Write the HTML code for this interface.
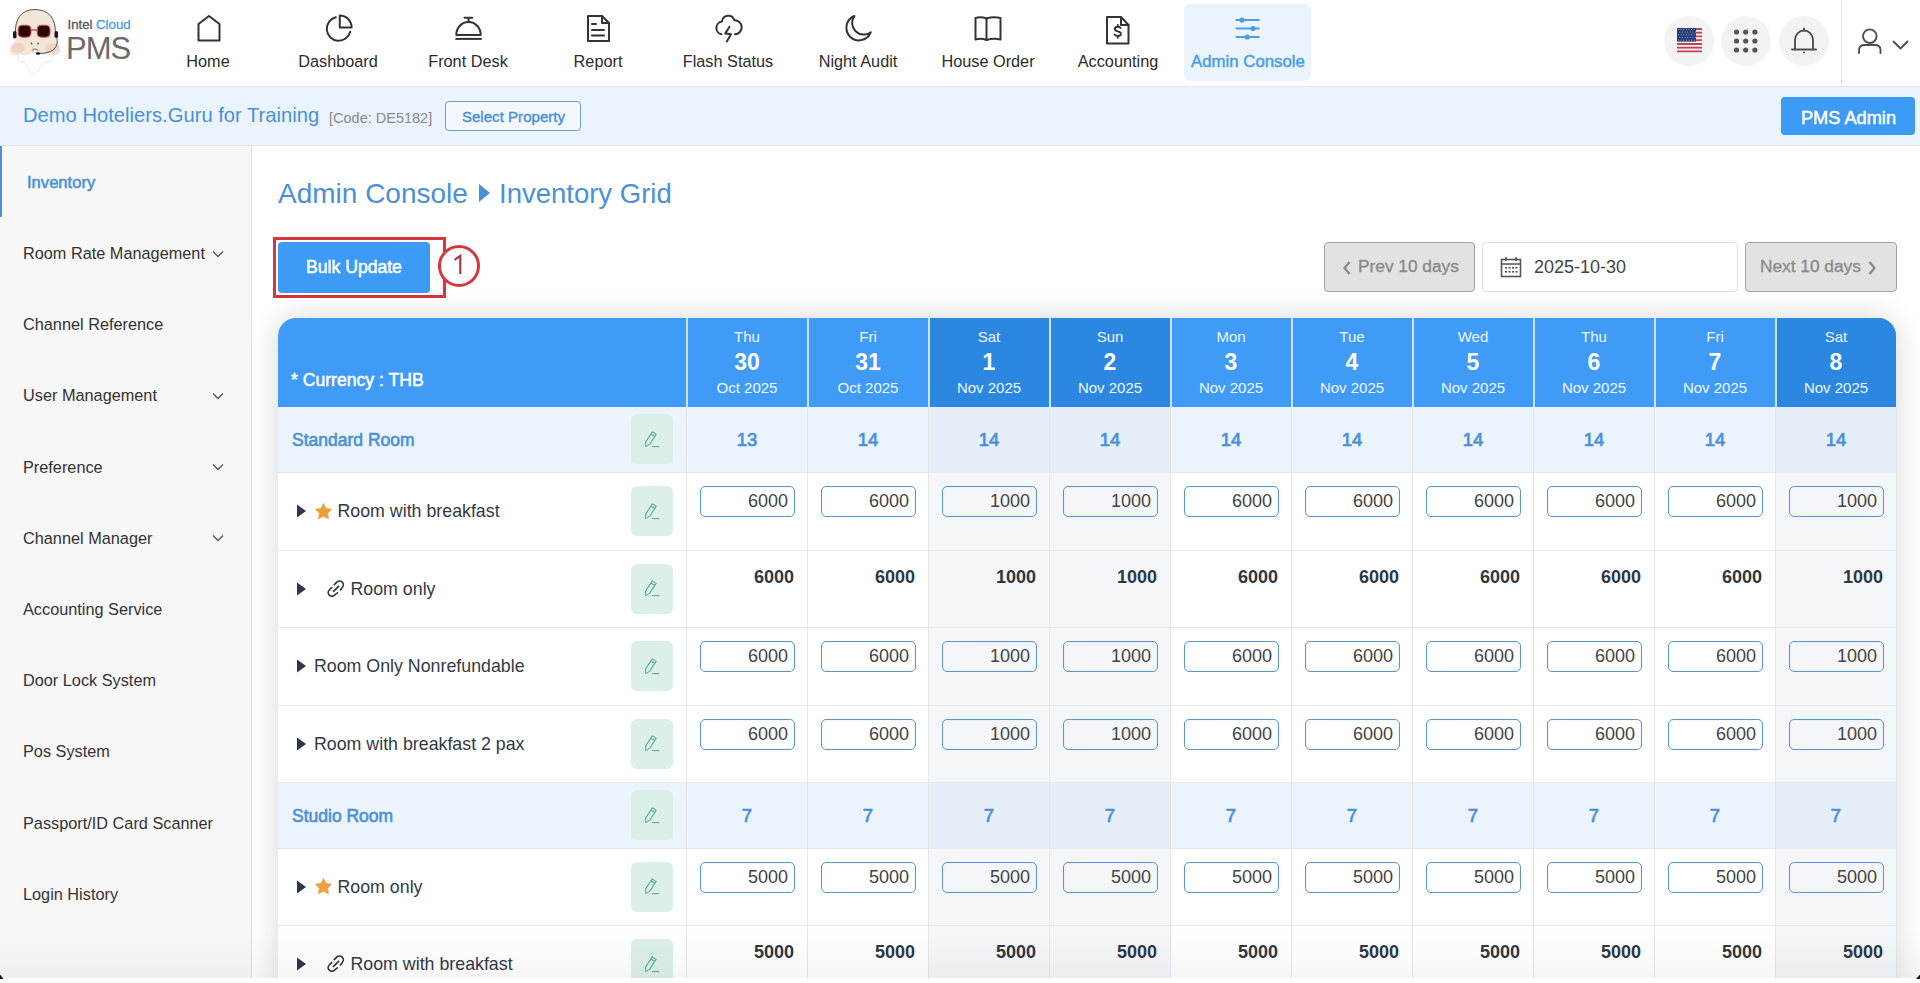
<!DOCTYPE html>
<html><head><meta charset="utf-8"><title>Inventory Grid</title>
<style>
html,body{margin:0;padding:0;width:1920px;height:983px;overflow:hidden;background:#fff;font-family:"Liberation Sans", sans-serif;}
.t{position:absolute;line-height:1;white-space:nowrap;}
svg{display:block}
</style></head><body>
<div style="position:absolute;left:0;top:0;width:1920px;height:86px;background:#fff;border-bottom:1px solid #e3e6ea"></div>
<svg style="position:absolute;left:5px;top:5px" width="60" height="75" viewBox="0 0 60 75">
<path d="M11 20 Q12 5 30 5 Q48 5 50 20 L51 36 Q57 42 55 48 Q50 52 44 50 L16 50 Q8 52 5 47 Q4 41 10 37 Z" fill="#f3e6d8"/>
<ellipse cx="13" cy="43" rx="7" ry="5" fill="#efc3b3" opacity=".55"/>
<ellipse cx="47" cy="43" rx="7" ry="5" fill="#efc3b3" opacity=".55"/>
<path d="M14 48 Q22 52 30 46 Q38 52 47 48 L47 55 Q44 58 40 57 L31 68 Q29 70 27 68 L19 57 Q15 58 13 55 Z" fill="#fdfdfd" stroke="#e4e4e4" stroke-width=".8"/>
<path d="M10.5 30 Q9 5 30 4.5 Q51 5 50.5 29" fill="none" stroke="#5a5048" stroke-width="1"/>
<rect x="8" y="26" width="3.5" height="7.5" rx="1.7" fill="#1a1a1a"/>
<rect x="49.5" y="26" width="3.5" height="7" rx="1.7" fill="#1a1a1a"/>
<path d="M52 32 Q54 44 44 47 Q39 48.5 34 48.5" fill="none" stroke="#444" stroke-width=".9"/>
<ellipse cx="33" cy="48.5" rx="2.2" ry="1.3" fill="#111"/>
<rect x="13.2" y="20.2" width="12.8" height="12" rx="4" fill="#2b0707" stroke="#d25a5a" stroke-width="1"/>
<rect x="32.2" y="20.2" width="12.8" height="12" rx="4" fill="#2b0707" stroke="#d25a5a" stroke-width="1"/>
<path d="M26 25.5 Q29 24 32.2 25.5" fill="none" stroke="#d25a5a" stroke-width="1.4"/>
<circle cx="26.5" cy="38.5" r=".9" fill="#555"/><circle cx="33" cy="38.5" r=".9" fill="#555"/>
<path d="M27 45.5 Q30 42.5 33 45.5" fill="none" stroke="#b08a7a" stroke-width="1.3"/>
</svg>
<div class="t" style="left:67.5px;top:17.53px;font-size:13.2px;color:#555;font-weight:400;-webkit-text-stroke:0.3px #555;">Intel <span style="color:#4a9de6;-webkit-text-stroke:0.3px #4a9de6">Cloud</span></div>
<div class="t" style="left:66px;top:32.76px;font-size:31px;color:#6a6a6a;font-weight:400;letter-spacing:-1px;">PMS</div>
<div class="t" style="left:108.0px;width:200px;text-align:center;top:52.50px;font-size:16.3px;color:#2c2c2c;font-weight:400;">Home</div>
<div class="t" style="left:238.0px;width:200px;text-align:center;top:52.50px;font-size:16.3px;color:#2c2c2c;font-weight:400;">Dashboard</div>
<div class="t" style="left:368.0px;width:200px;text-align:center;top:52.50px;font-size:16.3px;color:#2c2c2c;font-weight:400;">Front Desk</div>
<div class="t" style="left:498.0px;width:200px;text-align:center;top:52.50px;font-size:16.3px;color:#2c2c2c;font-weight:400;">Report</div>
<div class="t" style="left:628.0px;width:200px;text-align:center;top:52.50px;font-size:16.3px;color:#2c2c2c;font-weight:400;">Flash Status</div>
<div class="t" style="left:758.0px;width:200px;text-align:center;top:52.50px;font-size:16.3px;color:#2c2c2c;font-weight:400;">Night Audit</div>
<div class="t" style="left:888.0px;width:200px;text-align:center;top:52.50px;font-size:16.3px;color:#2c2c2c;font-weight:400;">House Order</div>
<div class="t" style="left:1018.0px;width:200px;text-align:center;top:52.50px;font-size:16.3px;color:#2c2c2c;font-weight:400;">Accounting</div>
<div style="position:absolute;left:1184px;top:4px;width:127px;height:77px;background:#ebf3fd;border-radius:6px"></div>
<div class="t" style="left:1148.0px;width:200px;text-align:center;top:53.98px;font-size:16.8px;color:#4a9de6;font-weight:400;-webkit-text-stroke:0.45px #4a9de6;">Admin Console</div>
<svg style="position:absolute;left:196px;top:14px" width="26" height="29" viewBox="0 0 26 29"><path d="M2.5 26.5 V10 L13 2 L23.5 10 V26.5 Z" fill="none" stroke="#333" stroke-width="2" stroke-linejoin="round" stroke-linecap="round"/></svg>
<svg style="position:absolute;left:323px;top:13px" width="32" height="30" viewBox="0 0 32 30"><path d="M12.8 4.3 A11.9 11.9 0 1 0 27.2 18.8" fill="none" stroke="#333" stroke-width="2" stroke-linejoin="round" stroke-linecap="round"/><path d="M16.8 14.4 V2.6 A11.8 11.8 0 0 1 28.6 14.4 Z" fill="none" stroke="#333" stroke-width="2" stroke-linejoin="round" stroke-linecap="round"/></svg>
<svg style="position:absolute;left:453px;top:15px" width="31" height="27" viewBox="0 0 31 27"><path d="M11.5 2.8 H19.3 M15.5 2.8 V6.8" fill="none" stroke="#333" stroke-width="2" stroke-linejoin="round" stroke-linecap="round"/><path d="M3.3 20 A12.2 13 0 0 1 27.7 20 Z" fill="none" stroke="#333" stroke-width="2" stroke-linejoin="round" stroke-linecap="round"/><path d="M2.4 23.9 H28.7" fill="none" stroke="#333" stroke-width="2"/></svg>
<svg style="position:absolute;left:585px;top:14px" width="27" height="29" viewBox="0 0 27 29"><path d="M3 2 H17 L24 9 V27 H3 Z" fill="none" stroke="#333" stroke-width="2" stroke-linejoin="round" stroke-linecap="round"/><path d="M17 2 V9 H24" fill="none" stroke="#333" stroke-width="2" stroke-linejoin="round" stroke-linecap="round"/><path d="M7 10 H11 M7 16 H19 M7 21.5 H19" fill="none" stroke="#333" stroke-width="2" stroke-linejoin="round" stroke-linecap="round"/></svg>
<svg style="position:absolute;left:713px;top:14px" width="31" height="30" viewBox="0 0 31 30"><path d="M8.5 20.3 A6.5 6.5 0 0 1 9 7.5 A6.3 6.3 0 0 1 21.3 6.3 A7 7 0 0 1 22 20.3" fill="none" stroke="#333" stroke-width="2" stroke-linejoin="round" stroke-linecap="round"/><path d="M16.5 12.7 L12.3 19.4 L18 20.3 L13.8 27.5" fill="none" stroke="#333" stroke-width="2" stroke-linejoin="round" stroke-linecap="round"/></svg>
<svg style="position:absolute;left:835px;top:8px" width="50" height="40" viewBox="0 0 50 40"><path d="M19.5 8 A12.6 12.6 0 1 0 35.8 24.2 A11.6 11.6 0 0 1 19.5 8 Z" fill="none" stroke="#333" stroke-width="2" stroke-linejoin="round" stroke-linecap="round"/></svg>
<svg style="position:absolute;left:973px;top:15px" width="31" height="29" viewBox="0 0 31 29"><path d="M2.5 3 Q8 1.5 13.5 3.5 Q20 1.5 27.5 3 V24.5 Q20 23 13.5 25 Q8 23 2.5 24.5 Z" fill="none" stroke="#333" stroke-width="2" stroke-linejoin="round" stroke-linecap="round"/><path d="M13.5 3.5 V25" fill="none" stroke="#333" stroke-width="2" stroke-linejoin="round" stroke-linecap="round"/></svg>
<svg style="position:absolute;left:1104px;top:15px" width="28" height="31" viewBox="0 0 28 31"><path d="M3 2 H17 L24.5 10 V28.5 H3 Z" fill="none" stroke="#333" stroke-width="2" stroke-linejoin="round" stroke-linecap="round"/><path d="M17 2 V10 H24.5" fill="none" stroke="#333" stroke-width="2" stroke-linejoin="round" stroke-linecap="round"/><path d="M16.6 12.9 Q15.5 11.8 13.8 11.8 Q10.9 11.8 10.9 14 Q10.9 15.6 13.8 16.3 Q16.9 17 16.9 18.8 Q16.9 21 13.8 21 Q11.8 21 10.6 19.6 M13.8 10 V11.8 M13.8 21 V22.8" fill="none" stroke="#333" stroke-width="1.9" stroke-linecap="round" stroke-linejoin="round"/></svg>
<svg style="position:absolute;left:1234px;top:16px" width="28" height="24" viewBox="0 0 28 24"><path d="M2.5 4 H24.8 M2.5 12.5 H24.8 M2.5 21 H24.8" stroke="#4a9de6" stroke-width="2" stroke-linecap="round"/><circle cx="8" cy="4" r="2.6" fill="#4a9de6"/><circle cx="19" cy="12.5" r="2.6" fill="#4a9de6"/><circle cx="13.2" cy="21" r="2.6" fill="#4a9de6"/></svg>
<div style="position:absolute;left:1664px;top:16px;width:50px;height:50px;border-radius:25px;background:#f3f3f3"></div>
<div style="position:absolute;left:1721px;top:16px;width:50px;height:50px;border-radius:25px;background:#f3f3f3"></div>
<div style="position:absolute;left:1779px;top:16px;width:50px;height:50px;border-radius:25px;background:#f3f3f3"></div>
<svg style="position:absolute;left:1677px;top:28px" width="25" height="26" viewBox="0 0 25 26"><rect x="0" y="0.00" width="25" height="2" fill="#c44250"/><rect x="0" y="2.00" width="25" height="1.75" fill="#f4f4f4"/><rect x="0" y="3.75" width="25" height="2" fill="#c44250"/><rect x="0" y="5.75" width="25" height="1.75" fill="#f4f4f4"/><rect x="0" y="7.50" width="25" height="2" fill="#c44250"/><rect x="0" y="9.50" width="25" height="1.75" fill="#f4f4f4"/><rect x="0" y="11.25" width="25" height="2" fill="#c44250"/><rect x="0" y="13.25" width="25" height="1.75" fill="#f4f4f4"/><rect x="0" y="15.00" width="25" height="2" fill="#c44250"/><rect x="0" y="17.00" width="25" height="1.75" fill="#f4f4f4"/><rect x="0" y="18.75" width="25" height="2" fill="#c44250"/><rect x="0" y="20.75" width="25" height="1.75" fill="#f4f4f4"/><rect x="0" y="22.50" width="25" height="2" fill="#c44250"/><rect x="0" y="24.50" width="25" height="1.75" fill="#f4f4f4"/><rect x="0" y="0" width="19" height="13.6" fill="#263a78"/><circle cx="1.6" cy="1.5" r=".5" fill="#c5cde6"/><circle cx="4.2" cy="1.5" r=".5" fill="#c5cde6"/><circle cx="6.8" cy="1.5" r=".5" fill="#c5cde6"/><circle cx="9.4" cy="1.5" r=".5" fill="#c5cde6"/><circle cx="12.0" cy="1.5" r=".5" fill="#c5cde6"/><circle cx="14.6" cy="1.5" r=".5" fill="#c5cde6"/><circle cx="17.2" cy="1.5" r=".5" fill="#c5cde6"/><circle cx="2.9" cy="4.1" r=".5" fill="#c5cde6"/><circle cx="5.5" cy="4.1" r=".5" fill="#c5cde6"/><circle cx="8.1" cy="4.1" r=".5" fill="#c5cde6"/><circle cx="10.7" cy="4.1" r=".5" fill="#c5cde6"/><circle cx="13.3" cy="4.1" r=".5" fill="#c5cde6"/><circle cx="15.9" cy="4.1" r=".5" fill="#c5cde6"/><circle cx="18.5" cy="4.1" r=".5" fill="#c5cde6"/><circle cx="1.6" cy="6.7" r=".5" fill="#c5cde6"/><circle cx="4.2" cy="6.7" r=".5" fill="#c5cde6"/><circle cx="6.8" cy="6.7" r=".5" fill="#c5cde6"/><circle cx="9.4" cy="6.7" r=".5" fill="#c5cde6"/><circle cx="12.0" cy="6.7" r=".5" fill="#c5cde6"/><circle cx="14.6" cy="6.7" r=".5" fill="#c5cde6"/><circle cx="17.2" cy="6.7" r=".5" fill="#c5cde6"/><circle cx="2.9" cy="9.3" r=".5" fill="#c5cde6"/><circle cx="5.5" cy="9.3" r=".5" fill="#c5cde6"/><circle cx="8.1" cy="9.3" r=".5" fill="#c5cde6"/><circle cx="10.7" cy="9.3" r=".5" fill="#c5cde6"/><circle cx="13.3" cy="9.3" r=".5" fill="#c5cde6"/><circle cx="15.9" cy="9.3" r=".5" fill="#c5cde6"/><circle cx="18.5" cy="9.3" r=".5" fill="#c5cde6"/><circle cx="1.6" cy="11.9" r=".5" fill="#c5cde6"/><circle cx="4.2" cy="11.9" r=".5" fill="#c5cde6"/><circle cx="6.8" cy="11.9" r=".5" fill="#c5cde6"/><circle cx="9.4" cy="11.9" r=".5" fill="#c5cde6"/><circle cx="12.0" cy="11.9" r=".5" fill="#c5cde6"/><circle cx="14.6" cy="11.9" r=".5" fill="#c5cde6"/><circle cx="17.2" cy="11.9" r=".5" fill="#c5cde6"/></svg>
<svg style="position:absolute;left:1732px;top:27px" width="28" height="28" viewBox="0 0 28 28"><circle cx="4.5" cy="5.0" r="2.6" fill="#555"/><circle cx="13.7" cy="5.0" r="2.6" fill="#555"/><circle cx="22.9" cy="5.0" r="2.6" fill="#555"/><circle cx="4.5" cy="14.0" r="2.6" fill="#555"/><circle cx="13.7" cy="14.0" r="2.6" fill="#555"/><circle cx="22.9" cy="14.0" r="2.6" fill="#555"/><circle cx="4.5" cy="23.0" r="2.6" fill="#555"/><circle cx="13.7" cy="23.0" r="2.6" fill="#555"/><circle cx="22.9" cy="23.0" r="2.6" fill="#555"/></svg>
<svg style="position:absolute;left:1789px;top:26px" width="30" height="30" viewBox="0 0 30 30"><path d="M15 2.5 V4.5" fill="none" stroke="#505050" stroke-width="1.9" stroke-linejoin="round" stroke-linecap="round"/><path d="M3 23.5 H27" fill="none" stroke="#505050" stroke-width="1.9" stroke-linejoin="round" stroke-linecap="round"/><path d="M6 23.5 V14 A9 9.5 0 0 1 24 14 V23.5" fill="none" stroke="#505050" stroke-width="1.9" stroke-linejoin="round" stroke-linecap="round"/><circle cx="15" cy="26.5" r="1" fill="#505050"/></svg>
<div style="position:absolute;left:1841px;top:0;width:1px;height:86px;background:#e3e3e3"></div>
<svg style="position:absolute;left:1856px;top:27px" width="28" height="28" viewBox="0 0 28 28"><circle cx="13.8" cy="9.2" r="6.8" fill="none" stroke="#505050" stroke-width="1.9" stroke-linejoin="round" stroke-linecap="round"/><path d="M3 26 V23 Q3 18 9 18 H18.5 Q24.5 18 24.5 23 V26" fill="none" stroke="#505050" stroke-width="1.9" stroke-linejoin="round" stroke-linecap="round"/></svg>
<svg style="position:absolute;left:1890px;top:38px" width="22" height="14" viewBox="0 0 22 14"><path d="M3.5 3.5 L10.5 10.5 L17.5 3.5" fill="none" stroke="#505050" stroke-width="1.9" stroke-linejoin="round" stroke-linecap="round"/></svg>
<div style="position:absolute;left:0;top:87px;width:1920px;height:58px;background:#ebf3fd;border-bottom:1px solid #dfe6ee"></div>
<div class="t" style="left:23px;top:105.40px;font-size:20.2px;color:#4a90d9;font-weight:400;">Demo Hoteliers.Guru for Training</div>
<div class="t" style="left:329px;top:110.73px;font-size:14.5px;color:#8a8a8a;font-weight:400;">[Code: DE5182]</div>
<div style="position:absolute;left:445px;top:101px;width:136px;height:30px;box-sizing:border-box;border:1.6px solid #6a9fd0;border-radius:4px;background:#f3f8fe"></div>
<div class="t" style="left:413.5px;width:200px;text-align:center;top:109.22px;font-size:15.1px;color:#4a90d9;font-weight:400;-webkit-text-stroke:0.4px #4a90d9;">Select Property</div>
<div style="position:absolute;left:1781px;top:97px;width:134px;height:38px;background:#3d9af5;border-radius:4px"></div>
<div class="t" style="left:1748.5px;width:200px;text-align:center;top:108.89px;font-size:18.2px;color:#fff;font-weight:400;-webkit-text-stroke:0.5px #fff;">PMS Admin</div>
<div style="position:absolute;left:0;top:146px;width:251px;height:832px;background:#f7f7f7;border-right:1px solid #e2e2e2"></div>
<div style="position:absolute;left:0;top:146px;width:2px;height:71px;background:#4a90d9"></div>
<div class="t" style="left:27px;top:174.95px;font-size:16.6px;color:#4a90d9;font-weight:400;-webkit-text-stroke:0.55px #4a90d9;">Inventory</div>
<div class="t" style="left:23px;top:245.00px;font-size:16.3px;color:#333;font-weight:400;">Room Rate Management</div>
<svg style="position:absolute;left:212px;top:249.5px" width="12" height="8" viewBox="0 0 12 8"><path d="M1 1.5 L6 6.5 L11 1.5" fill="none" stroke="#555" stroke-width="1.3"/></svg>
<div class="t" style="left:23px;top:316.20px;font-size:16.3px;color:#333;font-weight:400;">Channel Reference</div>
<div class="t" style="left:23px;top:387.40px;font-size:16.3px;color:#333;font-weight:400;">User Management</div>
<svg style="position:absolute;left:212px;top:391.9px" width="12" height="8" viewBox="0 0 12 8"><path d="M1 1.5 L6 6.5 L11 1.5" fill="none" stroke="#555" stroke-width="1.3"/></svg>
<div class="t" style="left:23px;top:458.60px;font-size:16.3px;color:#333;font-weight:400;">Preference</div>
<svg style="position:absolute;left:212px;top:463.1px" width="12" height="8" viewBox="0 0 12 8"><path d="M1 1.5 L6 6.5 L11 1.5" fill="none" stroke="#555" stroke-width="1.3"/></svg>
<div class="t" style="left:23px;top:529.80px;font-size:16.3px;color:#333;font-weight:400;">Channel Manager</div>
<svg style="position:absolute;left:212px;top:534.3px" width="12" height="8" viewBox="0 0 12 8"><path d="M1 1.5 L6 6.5 L11 1.5" fill="none" stroke="#555" stroke-width="1.3"/></svg>
<div class="t" style="left:23px;top:601.00px;font-size:16.3px;color:#333;font-weight:400;">Accounting Service</div>
<div class="t" style="left:23px;top:672.20px;font-size:16.3px;color:#333;font-weight:400;">Door Lock System</div>
<div class="t" style="left:23px;top:743.40px;font-size:16.3px;color:#333;font-weight:400;">Pos System</div>
<div class="t" style="left:23px;top:814.60px;font-size:16.3px;color:#333;font-weight:400;">Passport/ID Card Scanner</div>
<div class="t" style="left:23px;top:885.80px;font-size:16.3px;color:#333;font-weight:400;">Login History</div>
<div class="t" style="left:278px;top:179.80px;font-size:28px;color:#4a90d9;font-weight:400;">Admin Console</div>
<svg style="position:absolute;left:478px;top:182px" width="14" height="22" viewBox="0 0 14 22"><path d="M1 2 L12 11 L1 20 Z" fill="#4a90d9"/></svg>
<div class="t" style="left:499px;top:180.22px;font-size:27.5px;color:#4a90d9;font-weight:400;">Inventory Grid</div>
<div style="position:absolute;left:273px;top:237px;width:173px;height:61px;box-sizing:border-box;border:3px solid #d8353d"></div>
<div style="position:absolute;left:278px;top:242px;width:152px;height:51px;background:#3d9af5;border-radius:4px"></div>
<div class="t" style="left:254.0px;width:200px;text-align:center;top:259.10px;font-size:17.6px;color:#fff;font-weight:400;-webkit-text-stroke:0.5px #fff;">Bulk Update</div>
<div style="position:absolute;left:438px;top:245px;width:42px;height:42px;box-sizing:border-box;border:3.3px solid #d8353d;border-radius:50%;background:#fff"></div>
<svg style="position:absolute;left:440px;top:250px" width="40" height="30" viewBox="0 0 40 30"><path d="M14.5 9.8 L20.3 5.8 V24" fill="none" stroke="#a53242" stroke-width="2.1" stroke-linejoin="miter"/></svg>
<div style="position:absolute;left:1324px;top:242px;width:151px;height:50px;box-sizing:border-box;border:1.5px solid #a3a3a3;border-radius:4px;background:#e2e2e2"></div>
<svg style="position:absolute;left:1341px;top:260px" width="12" height="16" viewBox="0 0 12 16"><path d="M8.5 2 L3.5 8 L8.5 14" fill="none" stroke="#888" stroke-width="2.2"/></svg>
<div class="t" style="left:1358px;top:258.36px;font-size:17.3px;color:#8a8a8a;font-weight:400;-webkit-text-stroke:0.35px #8a8a8a;">Prev 10 days</div>
<div style="position:absolute;left:1482px;top:242px;width:256px;height:50px;box-sizing:border-box;border:1px solid #e0e0e0;border-radius:4px;background:#fff"></div>
<svg style="position:absolute;left:1500px;top:256px" width="23" height="22" viewBox="0 0 23 22"><rect x="1.5" y="3.5" width="19" height="17" fill="none" stroke="#555" stroke-width="1.6"/><path d="M1.5 8 H20.5 M6 1 V5 M16 1 V5" stroke="#555" stroke-width="1.6"/><g fill="#555"><rect x="5" y="11" width="2" height="1.6"/><rect x="8.5" y="11" width="2" height="1.6"/><rect x="12" y="11" width="2" height="1.6"/><rect x="15.5" y="11" width="2" height="1.6"/><rect x="5" y="15" width="2" height="1.6"/><rect x="8.5" y="15" width="2" height="1.6"/><rect x="12" y="15" width="2" height="1.6"/><rect x="15.5" y="15" width="2" height="1.6"/></g></svg>
<div class="t" style="left:1534px;top:258.26px;font-size:18px;color:#444;font-weight:400;">2025-10-30</div>
<div style="position:absolute;left:1745px;top:242px;width:152px;height:50px;box-sizing:border-box;border:1.5px solid #a3a3a3;border-radius:4px;background:#e2e2e2"></div>
<div class="t" style="left:1760px;top:258.36px;font-size:17.3px;color:#8a8a8a;font-weight:400;-webkit-text-stroke:0.35px #8a8a8a;">Next 10 days</div>
<svg style="position:absolute;left:1866px;top:260px" width="12" height="16" viewBox="0 0 12 16"><path d="M3.5 2 L8.5 8 L3.5 14" fill="none" stroke="#888" stroke-width="2.2"/></svg>
<div style="position:absolute;left:278px;top:318px;width:1618px;height:700px;border-radius:18px 18px 0 0;box-shadow:0 0 30px rgba(0,0,0,0.16);background:#fff"></div>
<div style="position:absolute;left:278px;top:318px;width:1618px;height:89px;background:#409bf6;border-radius:18px 18px 0 0;overflow:hidden"><div style="position:absolute;left:650px;top:0;width:121px;height:89px;background:#2b87df"></div><div style="position:absolute;left:771px;top:0;width:121px;height:89px;background:#2b87df"></div><div style="position:absolute;left:1497px;top:0;width:121px;height:89px;background:#2b87df"></div><div style="position:absolute;left:408px;top:0;width:2px;height:89px;background:#c9e4fb"></div><div style="position:absolute;left:529px;top:0;width:2px;height:89px;background:#c9e4fb"></div><div style="position:absolute;left:650px;top:0;width:2px;height:89px;background:#c9e4fb"></div><div style="position:absolute;left:771px;top:0;width:2px;height:89px;background:#c9e4fb"></div><div style="position:absolute;left:892px;top:0;width:2px;height:89px;background:#c9e4fb"></div><div style="position:absolute;left:1013px;top:0;width:2px;height:89px;background:#c9e4fb"></div><div style="position:absolute;left:1134px;top:0;width:2px;height:89px;background:#c9e4fb"></div><div style="position:absolute;left:1255px;top:0;width:2px;height:89px;background:#c9e4fb"></div><div style="position:absolute;left:1376px;top:0;width:2px;height:89px;background:#c9e4fb"></div><div style="position:absolute;left:1497px;top:0;width:2px;height:89px;background:#c9e4fb"></div></div>
<div class="t" style="left:291px;top:372.10px;font-size:17.6px;color:#fff;font-weight:400;-webkit-text-stroke:0.5px #fff;">* Currency : THB</div>
<div class="t" style="left:687.0px;width:120px;text-align:center;top:329.30px;font-size:15px;color:#eef7ff;font-weight:400;">Thu</div>
<div class="t" style="left:687.0px;width:120px;text-align:center;top:351.03px;font-size:23px;color:#fff;font-weight:700;">30</div>
<div class="t" style="left:687.0px;width:120px;text-align:center;top:380.30px;font-size:15px;color:#eef7ff;font-weight:400;">Oct 2025</div>
<div class="t" style="left:808.0px;width:120px;text-align:center;top:329.30px;font-size:15px;color:#eef7ff;font-weight:400;">Fri</div>
<div class="t" style="left:808.0px;width:120px;text-align:center;top:351.03px;font-size:23px;color:#fff;font-weight:700;">31</div>
<div class="t" style="left:808.0px;width:120px;text-align:center;top:380.30px;font-size:15px;color:#eef7ff;font-weight:400;">Oct 2025</div>
<div class="t" style="left:929.0px;width:120px;text-align:center;top:329.30px;font-size:15px;color:#eef7ff;font-weight:400;">Sat</div>
<div class="t" style="left:929.0px;width:120px;text-align:center;top:351.03px;font-size:23px;color:#fff;font-weight:700;">1</div>
<div class="t" style="left:929.0px;width:120px;text-align:center;top:380.30px;font-size:15px;color:#eef7ff;font-weight:400;">Nov 2025</div>
<div class="t" style="left:1050.0px;width:120px;text-align:center;top:329.30px;font-size:15px;color:#eef7ff;font-weight:400;">Sun</div>
<div class="t" style="left:1050.0px;width:120px;text-align:center;top:351.03px;font-size:23px;color:#fff;font-weight:700;">2</div>
<div class="t" style="left:1050.0px;width:120px;text-align:center;top:380.30px;font-size:15px;color:#eef7ff;font-weight:400;">Nov 2025</div>
<div class="t" style="left:1171.0px;width:120px;text-align:center;top:329.30px;font-size:15px;color:#eef7ff;font-weight:400;">Mon</div>
<div class="t" style="left:1171.0px;width:120px;text-align:center;top:351.03px;font-size:23px;color:#fff;font-weight:700;">3</div>
<div class="t" style="left:1171.0px;width:120px;text-align:center;top:380.30px;font-size:15px;color:#eef7ff;font-weight:400;">Nov 2025</div>
<div class="t" style="left:1292.0px;width:120px;text-align:center;top:329.30px;font-size:15px;color:#eef7ff;font-weight:400;">Tue</div>
<div class="t" style="left:1292.0px;width:120px;text-align:center;top:351.03px;font-size:23px;color:#fff;font-weight:700;">4</div>
<div class="t" style="left:1292.0px;width:120px;text-align:center;top:380.30px;font-size:15px;color:#eef7ff;font-weight:400;">Nov 2025</div>
<div class="t" style="left:1413.0px;width:120px;text-align:center;top:329.30px;font-size:15px;color:#eef7ff;font-weight:400;">Wed</div>
<div class="t" style="left:1413.0px;width:120px;text-align:center;top:351.03px;font-size:23px;color:#fff;font-weight:700;">5</div>
<div class="t" style="left:1413.0px;width:120px;text-align:center;top:380.30px;font-size:15px;color:#eef7ff;font-weight:400;">Nov 2025</div>
<div class="t" style="left:1534.0px;width:120px;text-align:center;top:329.30px;font-size:15px;color:#eef7ff;font-weight:400;">Thu</div>
<div class="t" style="left:1534.0px;width:120px;text-align:center;top:351.03px;font-size:23px;color:#fff;font-weight:700;">6</div>
<div class="t" style="left:1534.0px;width:120px;text-align:center;top:380.30px;font-size:15px;color:#eef7ff;font-weight:400;">Nov 2025</div>
<div class="t" style="left:1655.0px;width:120px;text-align:center;top:329.30px;font-size:15px;color:#eef7ff;font-weight:400;">Fri</div>
<div class="t" style="left:1655.0px;width:120px;text-align:center;top:351.03px;font-size:23px;color:#fff;font-weight:700;">7</div>
<div class="t" style="left:1655.0px;width:120px;text-align:center;top:380.30px;font-size:15px;color:#eef7ff;font-weight:400;">Nov 2025</div>
<div class="t" style="left:1776.0px;width:120px;text-align:center;top:329.30px;font-size:15px;color:#eef7ff;font-weight:400;">Sat</div>
<div class="t" style="left:1776.0px;width:120px;text-align:center;top:351.03px;font-size:23px;color:#fff;font-weight:700;">8</div>
<div class="t" style="left:1776.0px;width:120px;text-align:center;top:380.30px;font-size:15px;color:#eef7ff;font-weight:400;">Nov 2025</div>
<div style="position:absolute;left:278px;top:407px;width:1618px;height:65px;background:#ebf3fd;box-sizing:border-box"></div>
<div style="position:absolute;left:928px;top:407px;width:121px;height:65px;background:#e5eef9"></div>
<div style="position:absolute;left:1049px;top:407px;width:121px;height:65px;background:#e5eef9"></div>
<div style="position:absolute;left:1775px;top:407px;width:121px;height:65px;background:#e5eef9"></div>
<div style="position:absolute;left:686px;top:406px;width:1px;height:66px;background:#e6e7ea"></div>
<div style="position:absolute;left:807px;top:406px;width:1px;height:66px;background:#e6e7ea"></div>
<div style="position:absolute;left:928px;top:406px;width:1px;height:66px;background:#e6e7ea"></div>
<div style="position:absolute;left:1049px;top:406px;width:1px;height:66px;background:#e6e7ea"></div>
<div style="position:absolute;left:1170px;top:406px;width:1px;height:66px;background:#e6e7ea"></div>
<div style="position:absolute;left:1291px;top:406px;width:1px;height:66px;background:#e6e7ea"></div>
<div style="position:absolute;left:1412px;top:406px;width:1px;height:66px;background:#e6e7ea"></div>
<div style="position:absolute;left:1533px;top:406px;width:1px;height:66px;background:#e6e7ea"></div>
<div style="position:absolute;left:1654px;top:406px;width:1px;height:66px;background:#e6e7ea"></div>
<div style="position:absolute;left:1775px;top:406px;width:1px;height:66px;background:#e6e7ea"></div>
<div style="position:absolute;left:1896px;top:406px;width:1px;height:66px;background:#e6e7ea"></div>
<div style="position:absolute;left:630.5px;top:414.0px;width:42.5px;height:50px;background:#dcefe6;border-radius:6px"></div>
<div style="position:absolute;left:643px;top:430.5px;width:18px;height:18px"><svg width="18" height="18" viewBox="0 0 18 18"><path d="M9.3 0.9 L13.1 3.4 L6.6 13.4 L2.7 15.6 L2.7 10.9 Z M7.9 3 L11.8 5.5" fill="#d8f5ec" stroke="#5aab90" stroke-width="1.05" stroke-linejoin="round"/><path d="M8.9 15.6 H16.3" stroke="#5aab90" stroke-width="1.05"/></svg></div>
<div class="t" style="left:292px;top:431.69px;font-size:17.5px;color:#4a90d9;font-weight:400;-webkit-text-stroke:0.6px #4a90d9;">Standard Room</div>
<div class="t" style="left:687.0px;width:120px;text-align:center;top:430.84px;font-size:18.5px;color:#4a90d9;font-weight:400;-webkit-text-stroke:0.7px #4a90d9;">13</div>
<div class="t" style="left:808.0px;width:120px;text-align:center;top:430.84px;font-size:18.5px;color:#4a90d9;font-weight:400;-webkit-text-stroke:0.7px #4a90d9;">14</div>
<div class="t" style="left:929.0px;width:120px;text-align:center;top:430.84px;font-size:18.5px;color:#4a90d9;font-weight:400;-webkit-text-stroke:0.7px #4a90d9;">14</div>
<div class="t" style="left:1050.0px;width:120px;text-align:center;top:430.84px;font-size:18.5px;color:#4a90d9;font-weight:400;-webkit-text-stroke:0.7px #4a90d9;">14</div>
<div class="t" style="left:1171.0px;width:120px;text-align:center;top:430.84px;font-size:18.5px;color:#4a90d9;font-weight:400;-webkit-text-stroke:0.7px #4a90d9;">14</div>
<div class="t" style="left:1292.0px;width:120px;text-align:center;top:430.84px;font-size:18.5px;color:#4a90d9;font-weight:400;-webkit-text-stroke:0.7px #4a90d9;">14</div>
<div class="t" style="left:1413.0px;width:120px;text-align:center;top:430.84px;font-size:18.5px;color:#4a90d9;font-weight:400;-webkit-text-stroke:0.7px #4a90d9;">14</div>
<div class="t" style="left:1534.0px;width:120px;text-align:center;top:430.84px;font-size:18.5px;color:#4a90d9;font-weight:400;-webkit-text-stroke:0.7px #4a90d9;">14</div>
<div class="t" style="left:1655.0px;width:120px;text-align:center;top:430.84px;font-size:18.5px;color:#4a90d9;font-weight:400;-webkit-text-stroke:0.7px #4a90d9;">14</div>
<div class="t" style="left:1776.0px;width:120px;text-align:center;top:430.84px;font-size:18.5px;color:#4a90d9;font-weight:400;-webkit-text-stroke:0.7px #4a90d9;">14</div>
<div style="position:absolute;left:278px;top:472px;width:1618px;height:78px;background:#fff;border-top:1px solid #e7e8eb;box-sizing:border-box"></div>
<div style="position:absolute;left:928px;top:473px;width:121px;height:77px;background:#f4f6f9"></div>
<div style="position:absolute;left:1049px;top:473px;width:121px;height:77px;background:#f4f6f9"></div>
<div style="position:absolute;left:1775px;top:473px;width:121px;height:77px;background:#f4f6f9"></div>
<div style="position:absolute;left:686px;top:472px;width:1px;height:78px;background:#e6e7ea"></div>
<div style="position:absolute;left:807px;top:472px;width:1px;height:78px;background:#e6e7ea"></div>
<div style="position:absolute;left:928px;top:472px;width:1px;height:78px;background:#e6e7ea"></div>
<div style="position:absolute;left:1049px;top:472px;width:1px;height:78px;background:#e6e7ea"></div>
<div style="position:absolute;left:1170px;top:472px;width:1px;height:78px;background:#e6e7ea"></div>
<div style="position:absolute;left:1291px;top:472px;width:1px;height:78px;background:#e6e7ea"></div>
<div style="position:absolute;left:1412px;top:472px;width:1px;height:78px;background:#e6e7ea"></div>
<div style="position:absolute;left:1533px;top:472px;width:1px;height:78px;background:#e6e7ea"></div>
<div style="position:absolute;left:1654px;top:472px;width:1px;height:78px;background:#e6e7ea"></div>
<div style="position:absolute;left:1775px;top:472px;width:1px;height:78px;background:#e6e7ea"></div>
<div style="position:absolute;left:1896px;top:472px;width:1px;height:78px;background:#e6e7ea"></div>
<div style="position:absolute;left:630.5px;top:486.0px;width:42.5px;height:50px;background:#ddefe9;border-radius:6px"></div>
<div style="position:absolute;left:643px;top:502.5px;width:18px;height:18px"><svg width="18" height="18" viewBox="0 0 18 18"><path d="M9.3 0.9 L13.1 3.4 L6.6 13.4 L2.7 15.6 L2.7 10.9 Z M7.9 3 L11.8 5.5" fill="#d8f5ec" stroke="#5aab90" stroke-width="1.05" stroke-linejoin="round"/><path d="M8.9 15.6 H16.3" stroke="#5aab90" stroke-width="1.05"/></svg></div>
<svg style="position:absolute;left:296px;top:504.0px" width="11" height="14" viewBox="0 0 11 14"><path d="M1 0.5 L10 7 L1 13.5 Z" fill="#2d3748"/></svg>
<svg style="position:absolute;left:314.5px;top:502.8px" width="17" height="17" viewBox="0 0 17 17"><path d="M8.50 0.50 L11.03 5.42 L16.49 6.30 L12.59 10.23 L13.44 15.70 L8.50 13.20 L3.56 15.70 L4.41 10.23 L0.51 6.30 L5.97 5.42 Z" fill="#eba23a" stroke="#eba23a" stroke-width="0.8" stroke-linejoin="round"/></svg>
<div class="t" style="left:337.5px;top:503.13px;font-size:17.8px;color:#333a44;font-weight:400;">Room with breakfast</div>
<div style="position:absolute;left:700px;top:486px;width:95px;height:30.5px;box-sizing:border-box;border:1.5px solid #5e96c6;border-radius:5px;background:transparent;box-shadow:inset 0 0 2px #cfe8fb"></div>
<div class="t" style="left:688px;width:100px;text-align:right;top:491.76px;font-size:18px;color:#444;font-weight:400;">6000</div>
<div style="position:absolute;left:821px;top:486px;width:95px;height:30.5px;box-sizing:border-box;border:1.5px solid #5e96c6;border-radius:5px;background:transparent;box-shadow:inset 0 0 2px #cfe8fb"></div>
<div class="t" style="left:809px;width:100px;text-align:right;top:491.76px;font-size:18px;color:#444;font-weight:400;">6000</div>
<div style="position:absolute;left:942px;top:486px;width:95px;height:30.5px;box-sizing:border-box;border:1.5px solid #5e96c6;border-radius:5px;background:transparent;box-shadow:inset 0 0 2px #cfe8fb"></div>
<div class="t" style="left:930px;width:100px;text-align:right;top:491.76px;font-size:18px;color:#444;font-weight:400;">1000</div>
<div style="position:absolute;left:1063px;top:486px;width:95px;height:30.5px;box-sizing:border-box;border:1.5px solid #5e96c6;border-radius:5px;background:transparent;box-shadow:inset 0 0 2px #cfe8fb"></div>
<div class="t" style="left:1051px;width:100px;text-align:right;top:491.76px;font-size:18px;color:#444;font-weight:400;">1000</div>
<div style="position:absolute;left:1184px;top:486px;width:95px;height:30.5px;box-sizing:border-box;border:1.5px solid #5e96c6;border-radius:5px;background:transparent;box-shadow:inset 0 0 2px #cfe8fb"></div>
<div class="t" style="left:1172px;width:100px;text-align:right;top:491.76px;font-size:18px;color:#444;font-weight:400;">6000</div>
<div style="position:absolute;left:1305px;top:486px;width:95px;height:30.5px;box-sizing:border-box;border:1.5px solid #5e96c6;border-radius:5px;background:transparent;box-shadow:inset 0 0 2px #cfe8fb"></div>
<div class="t" style="left:1293px;width:100px;text-align:right;top:491.76px;font-size:18px;color:#444;font-weight:400;">6000</div>
<div style="position:absolute;left:1426px;top:486px;width:95px;height:30.5px;box-sizing:border-box;border:1.5px solid #5e96c6;border-radius:5px;background:transparent;box-shadow:inset 0 0 2px #cfe8fb"></div>
<div class="t" style="left:1414px;width:100px;text-align:right;top:491.76px;font-size:18px;color:#444;font-weight:400;">6000</div>
<div style="position:absolute;left:1547px;top:486px;width:95px;height:30.5px;box-sizing:border-box;border:1.5px solid #5e96c6;border-radius:5px;background:transparent;box-shadow:inset 0 0 2px #cfe8fb"></div>
<div class="t" style="left:1535px;width:100px;text-align:right;top:491.76px;font-size:18px;color:#444;font-weight:400;">6000</div>
<div style="position:absolute;left:1668px;top:486px;width:95px;height:30.5px;box-sizing:border-box;border:1.5px solid #5e96c6;border-radius:5px;background:transparent;box-shadow:inset 0 0 2px #cfe8fb"></div>
<div class="t" style="left:1656px;width:100px;text-align:right;top:491.76px;font-size:18px;color:#444;font-weight:400;">6000</div>
<div style="position:absolute;left:1789px;top:486px;width:95px;height:30.5px;box-sizing:border-box;border:1.5px solid #5e96c6;border-radius:5px;background:transparent;box-shadow:inset 0 0 2px #cfe8fb"></div>
<div class="t" style="left:1777px;width:100px;text-align:right;top:491.76px;font-size:18px;color:#444;font-weight:400;">1000</div>
<div style="position:absolute;left:278px;top:550px;width:1618px;height:77px;background:#fff;border-top:1px solid #e7e8eb;box-sizing:border-box"></div>
<div style="position:absolute;left:928px;top:551px;width:121px;height:76px;background:#f4f6f9"></div>
<div style="position:absolute;left:1049px;top:551px;width:121px;height:76px;background:#f4f6f9"></div>
<div style="position:absolute;left:1775px;top:551px;width:121px;height:76px;background:#f4f6f9"></div>
<div style="position:absolute;left:686px;top:550px;width:1px;height:77px;background:#e6e7ea"></div>
<div style="position:absolute;left:807px;top:550px;width:1px;height:77px;background:#e6e7ea"></div>
<div style="position:absolute;left:928px;top:550px;width:1px;height:77px;background:#e6e7ea"></div>
<div style="position:absolute;left:1049px;top:550px;width:1px;height:77px;background:#e6e7ea"></div>
<div style="position:absolute;left:1170px;top:550px;width:1px;height:77px;background:#e6e7ea"></div>
<div style="position:absolute;left:1291px;top:550px;width:1px;height:77px;background:#e6e7ea"></div>
<div style="position:absolute;left:1412px;top:550px;width:1px;height:77px;background:#e6e7ea"></div>
<div style="position:absolute;left:1533px;top:550px;width:1px;height:77px;background:#e6e7ea"></div>
<div style="position:absolute;left:1654px;top:550px;width:1px;height:77px;background:#e6e7ea"></div>
<div style="position:absolute;left:1775px;top:550px;width:1px;height:77px;background:#e6e7ea"></div>
<div style="position:absolute;left:1896px;top:550px;width:1px;height:77px;background:#e6e7ea"></div>
<div style="position:absolute;left:630.5px;top:563.5px;width:42.5px;height:50px;background:#ddefe9;border-radius:6px"></div>
<div style="position:absolute;left:643px;top:580.0px;width:18px;height:18px"><svg width="18" height="18" viewBox="0 0 18 18"><path d="M9.3 0.9 L13.1 3.4 L6.6 13.4 L2.7 15.6 L2.7 10.9 Z M7.9 3 L11.8 5.5" fill="#d8f5ec" stroke="#5aab90" stroke-width="1.05" stroke-linejoin="round"/><path d="M8.9 15.6 H16.3" stroke="#5aab90" stroke-width="1.05"/></svg></div>
<svg style="position:absolute;left:296px;top:581.5px" width="11" height="14" viewBox="0 0 11 14"><path d="M1 0.5 L10 7 L1 13.5 Z" fill="#2d3748"/></svg>
<svg style="position:absolute;left:320px;top:570px" width="40" height="35" viewBox="0 0 40 35"><g fill="none" stroke="#333a44" stroke-width="1.7" stroke-linecap="round"><path d="M14.3 14.6 L16.8 12.1 A3.8 3.8 0 0 1 22.2 17.5 L20.4 19.9"/><path d="M11.7 17.6 L9.3 20 A3.6 3.6 0 0 0 14.5 25.2 L17.4 22.9"/><path d="M13.5 21.4 L18.6 16.3"/></g></svg>
<div class="t" style="left:350.5px;top:580.63px;font-size:17.8px;color:#333a44;font-weight:400;">Room only</div>
<div class="t" style="left:694px;width:100px;text-align:right;top:567.76px;font-size:18px;color:#2f3743;font-weight:700;">6000</div>
<div class="t" style="left:815px;width:100px;text-align:right;top:567.76px;font-size:18px;color:#2f3743;font-weight:700;">6000</div>
<div class="t" style="left:936px;width:100px;text-align:right;top:567.76px;font-size:18px;color:#2f3743;font-weight:700;">1000</div>
<div class="t" style="left:1057px;width:100px;text-align:right;top:567.76px;font-size:18px;color:#2f3743;font-weight:700;">1000</div>
<div class="t" style="left:1178px;width:100px;text-align:right;top:567.76px;font-size:18px;color:#2f3743;font-weight:700;">6000</div>
<div class="t" style="left:1299px;width:100px;text-align:right;top:567.76px;font-size:18px;color:#2f3743;font-weight:700;">6000</div>
<div class="t" style="left:1420px;width:100px;text-align:right;top:567.76px;font-size:18px;color:#2f3743;font-weight:700;">6000</div>
<div class="t" style="left:1541px;width:100px;text-align:right;top:567.76px;font-size:18px;color:#2f3743;font-weight:700;">6000</div>
<div class="t" style="left:1662px;width:100px;text-align:right;top:567.76px;font-size:18px;color:#2f3743;font-weight:700;">6000</div>
<div class="t" style="left:1783px;width:100px;text-align:right;top:567.76px;font-size:18px;color:#2f3743;font-weight:700;">1000</div>
<div style="position:absolute;left:278px;top:627px;width:1618px;height:78px;background:#fff;border-top:1px solid #e7e8eb;box-sizing:border-box"></div>
<div style="position:absolute;left:928px;top:628px;width:121px;height:77px;background:#f4f6f9"></div>
<div style="position:absolute;left:1049px;top:628px;width:121px;height:77px;background:#f4f6f9"></div>
<div style="position:absolute;left:1775px;top:628px;width:121px;height:77px;background:#f4f6f9"></div>
<div style="position:absolute;left:686px;top:627px;width:1px;height:78px;background:#e6e7ea"></div>
<div style="position:absolute;left:807px;top:627px;width:1px;height:78px;background:#e6e7ea"></div>
<div style="position:absolute;left:928px;top:627px;width:1px;height:78px;background:#e6e7ea"></div>
<div style="position:absolute;left:1049px;top:627px;width:1px;height:78px;background:#e6e7ea"></div>
<div style="position:absolute;left:1170px;top:627px;width:1px;height:78px;background:#e6e7ea"></div>
<div style="position:absolute;left:1291px;top:627px;width:1px;height:78px;background:#e6e7ea"></div>
<div style="position:absolute;left:1412px;top:627px;width:1px;height:78px;background:#e6e7ea"></div>
<div style="position:absolute;left:1533px;top:627px;width:1px;height:78px;background:#e6e7ea"></div>
<div style="position:absolute;left:1654px;top:627px;width:1px;height:78px;background:#e6e7ea"></div>
<div style="position:absolute;left:1775px;top:627px;width:1px;height:78px;background:#e6e7ea"></div>
<div style="position:absolute;left:1896px;top:627px;width:1px;height:78px;background:#e6e7ea"></div>
<div style="position:absolute;left:630.5px;top:641.0px;width:42.5px;height:50px;background:#ddefe9;border-radius:6px"></div>
<div style="position:absolute;left:643px;top:657.5px;width:18px;height:18px"><svg width="18" height="18" viewBox="0 0 18 18"><path d="M9.3 0.9 L13.1 3.4 L6.6 13.4 L2.7 15.6 L2.7 10.9 Z M7.9 3 L11.8 5.5" fill="#d8f5ec" stroke="#5aab90" stroke-width="1.05" stroke-linejoin="round"/><path d="M8.9 15.6 H16.3" stroke="#5aab90" stroke-width="1.05"/></svg></div>
<svg style="position:absolute;left:296px;top:659.0px" width="11" height="14" viewBox="0 0 11 14"><path d="M1 0.5 L10 7 L1 13.5 Z" fill="#2d3748"/></svg>
<div class="t" style="left:314px;top:658.13px;font-size:17.8px;color:#333a44;font-weight:400;">Room Only Nonrefundable</div>
<div style="position:absolute;left:700px;top:641px;width:95px;height:30.5px;box-sizing:border-box;border:1.5px solid #5e96c6;border-radius:5px;background:transparent;box-shadow:inset 0 0 2px #cfe8fb"></div>
<div class="t" style="left:688px;width:100px;text-align:right;top:646.76px;font-size:18px;color:#444;font-weight:400;">6000</div>
<div style="position:absolute;left:821px;top:641px;width:95px;height:30.5px;box-sizing:border-box;border:1.5px solid #5e96c6;border-radius:5px;background:transparent;box-shadow:inset 0 0 2px #cfe8fb"></div>
<div class="t" style="left:809px;width:100px;text-align:right;top:646.76px;font-size:18px;color:#444;font-weight:400;">6000</div>
<div style="position:absolute;left:942px;top:641px;width:95px;height:30.5px;box-sizing:border-box;border:1.5px solid #5e96c6;border-radius:5px;background:transparent;box-shadow:inset 0 0 2px #cfe8fb"></div>
<div class="t" style="left:930px;width:100px;text-align:right;top:646.76px;font-size:18px;color:#444;font-weight:400;">1000</div>
<div style="position:absolute;left:1063px;top:641px;width:95px;height:30.5px;box-sizing:border-box;border:1.5px solid #5e96c6;border-radius:5px;background:transparent;box-shadow:inset 0 0 2px #cfe8fb"></div>
<div class="t" style="left:1051px;width:100px;text-align:right;top:646.76px;font-size:18px;color:#444;font-weight:400;">1000</div>
<div style="position:absolute;left:1184px;top:641px;width:95px;height:30.5px;box-sizing:border-box;border:1.5px solid #5e96c6;border-radius:5px;background:transparent;box-shadow:inset 0 0 2px #cfe8fb"></div>
<div class="t" style="left:1172px;width:100px;text-align:right;top:646.76px;font-size:18px;color:#444;font-weight:400;">6000</div>
<div style="position:absolute;left:1305px;top:641px;width:95px;height:30.5px;box-sizing:border-box;border:1.5px solid #5e96c6;border-radius:5px;background:transparent;box-shadow:inset 0 0 2px #cfe8fb"></div>
<div class="t" style="left:1293px;width:100px;text-align:right;top:646.76px;font-size:18px;color:#444;font-weight:400;">6000</div>
<div style="position:absolute;left:1426px;top:641px;width:95px;height:30.5px;box-sizing:border-box;border:1.5px solid #5e96c6;border-radius:5px;background:transparent;box-shadow:inset 0 0 2px #cfe8fb"></div>
<div class="t" style="left:1414px;width:100px;text-align:right;top:646.76px;font-size:18px;color:#444;font-weight:400;">6000</div>
<div style="position:absolute;left:1547px;top:641px;width:95px;height:30.5px;box-sizing:border-box;border:1.5px solid #5e96c6;border-radius:5px;background:transparent;box-shadow:inset 0 0 2px #cfe8fb"></div>
<div class="t" style="left:1535px;width:100px;text-align:right;top:646.76px;font-size:18px;color:#444;font-weight:400;">6000</div>
<div style="position:absolute;left:1668px;top:641px;width:95px;height:30.5px;box-sizing:border-box;border:1.5px solid #5e96c6;border-radius:5px;background:transparent;box-shadow:inset 0 0 2px #cfe8fb"></div>
<div class="t" style="left:1656px;width:100px;text-align:right;top:646.76px;font-size:18px;color:#444;font-weight:400;">6000</div>
<div style="position:absolute;left:1789px;top:641px;width:95px;height:30.5px;box-sizing:border-box;border:1.5px solid #5e96c6;border-radius:5px;background:transparent;box-shadow:inset 0 0 2px #cfe8fb"></div>
<div class="t" style="left:1777px;width:100px;text-align:right;top:646.76px;font-size:18px;color:#444;font-weight:400;">1000</div>
<div style="position:absolute;left:278px;top:705px;width:1618px;height:77px;background:#fff;border-top:1px solid #e7e8eb;box-sizing:border-box"></div>
<div style="position:absolute;left:928px;top:706px;width:121px;height:76px;background:#f4f6f9"></div>
<div style="position:absolute;left:1049px;top:706px;width:121px;height:76px;background:#f4f6f9"></div>
<div style="position:absolute;left:1775px;top:706px;width:121px;height:76px;background:#f4f6f9"></div>
<div style="position:absolute;left:686px;top:705px;width:1px;height:77px;background:#e6e7ea"></div>
<div style="position:absolute;left:807px;top:705px;width:1px;height:77px;background:#e6e7ea"></div>
<div style="position:absolute;left:928px;top:705px;width:1px;height:77px;background:#e6e7ea"></div>
<div style="position:absolute;left:1049px;top:705px;width:1px;height:77px;background:#e6e7ea"></div>
<div style="position:absolute;left:1170px;top:705px;width:1px;height:77px;background:#e6e7ea"></div>
<div style="position:absolute;left:1291px;top:705px;width:1px;height:77px;background:#e6e7ea"></div>
<div style="position:absolute;left:1412px;top:705px;width:1px;height:77px;background:#e6e7ea"></div>
<div style="position:absolute;left:1533px;top:705px;width:1px;height:77px;background:#e6e7ea"></div>
<div style="position:absolute;left:1654px;top:705px;width:1px;height:77px;background:#e6e7ea"></div>
<div style="position:absolute;left:1775px;top:705px;width:1px;height:77px;background:#e6e7ea"></div>
<div style="position:absolute;left:1896px;top:705px;width:1px;height:77px;background:#e6e7ea"></div>
<div style="position:absolute;left:630.5px;top:718.5px;width:42.5px;height:50px;background:#ddefe9;border-radius:6px"></div>
<div style="position:absolute;left:643px;top:735.0px;width:18px;height:18px"><svg width="18" height="18" viewBox="0 0 18 18"><path d="M9.3 0.9 L13.1 3.4 L6.6 13.4 L2.7 15.6 L2.7 10.9 Z M7.9 3 L11.8 5.5" fill="#d8f5ec" stroke="#5aab90" stroke-width="1.05" stroke-linejoin="round"/><path d="M8.9 15.6 H16.3" stroke="#5aab90" stroke-width="1.05"/></svg></div>
<svg style="position:absolute;left:296px;top:736.5px" width="11" height="14" viewBox="0 0 11 14"><path d="M1 0.5 L10 7 L1 13.5 Z" fill="#2d3748"/></svg>
<div class="t" style="left:314px;top:735.63px;font-size:17.8px;color:#333a44;font-weight:400;">Room with breakfast 2 pax</div>
<div style="position:absolute;left:700px;top:719px;width:95px;height:30.5px;box-sizing:border-box;border:1.5px solid #5e96c6;border-radius:5px;background:transparent;box-shadow:inset 0 0 2px #cfe8fb"></div>
<div class="t" style="left:688px;width:100px;text-align:right;top:724.76px;font-size:18px;color:#444;font-weight:400;">6000</div>
<div style="position:absolute;left:821px;top:719px;width:95px;height:30.5px;box-sizing:border-box;border:1.5px solid #5e96c6;border-radius:5px;background:transparent;box-shadow:inset 0 0 2px #cfe8fb"></div>
<div class="t" style="left:809px;width:100px;text-align:right;top:724.76px;font-size:18px;color:#444;font-weight:400;">6000</div>
<div style="position:absolute;left:942px;top:719px;width:95px;height:30.5px;box-sizing:border-box;border:1.5px solid #5e96c6;border-radius:5px;background:transparent;box-shadow:inset 0 0 2px #cfe8fb"></div>
<div class="t" style="left:930px;width:100px;text-align:right;top:724.76px;font-size:18px;color:#444;font-weight:400;">1000</div>
<div style="position:absolute;left:1063px;top:719px;width:95px;height:30.5px;box-sizing:border-box;border:1.5px solid #5e96c6;border-radius:5px;background:transparent;box-shadow:inset 0 0 2px #cfe8fb"></div>
<div class="t" style="left:1051px;width:100px;text-align:right;top:724.76px;font-size:18px;color:#444;font-weight:400;">1000</div>
<div style="position:absolute;left:1184px;top:719px;width:95px;height:30.5px;box-sizing:border-box;border:1.5px solid #5e96c6;border-radius:5px;background:transparent;box-shadow:inset 0 0 2px #cfe8fb"></div>
<div class="t" style="left:1172px;width:100px;text-align:right;top:724.76px;font-size:18px;color:#444;font-weight:400;">6000</div>
<div style="position:absolute;left:1305px;top:719px;width:95px;height:30.5px;box-sizing:border-box;border:1.5px solid #5e96c6;border-radius:5px;background:transparent;box-shadow:inset 0 0 2px #cfe8fb"></div>
<div class="t" style="left:1293px;width:100px;text-align:right;top:724.76px;font-size:18px;color:#444;font-weight:400;">6000</div>
<div style="position:absolute;left:1426px;top:719px;width:95px;height:30.5px;box-sizing:border-box;border:1.5px solid #5e96c6;border-radius:5px;background:transparent;box-shadow:inset 0 0 2px #cfe8fb"></div>
<div class="t" style="left:1414px;width:100px;text-align:right;top:724.76px;font-size:18px;color:#444;font-weight:400;">6000</div>
<div style="position:absolute;left:1547px;top:719px;width:95px;height:30.5px;box-sizing:border-box;border:1.5px solid #5e96c6;border-radius:5px;background:transparent;box-shadow:inset 0 0 2px #cfe8fb"></div>
<div class="t" style="left:1535px;width:100px;text-align:right;top:724.76px;font-size:18px;color:#444;font-weight:400;">6000</div>
<div style="position:absolute;left:1668px;top:719px;width:95px;height:30.5px;box-sizing:border-box;border:1.5px solid #5e96c6;border-radius:5px;background:transparent;box-shadow:inset 0 0 2px #cfe8fb"></div>
<div class="t" style="left:1656px;width:100px;text-align:right;top:724.76px;font-size:18px;color:#444;font-weight:400;">6000</div>
<div style="position:absolute;left:1789px;top:719px;width:95px;height:30.5px;box-sizing:border-box;border:1.5px solid #5e96c6;border-radius:5px;background:transparent;box-shadow:inset 0 0 2px #cfe8fb"></div>
<div class="t" style="left:1777px;width:100px;text-align:right;top:724.76px;font-size:18px;color:#444;font-weight:400;">1000</div>
<div style="position:absolute;left:278px;top:782px;width:1618px;height:66px;background:#ebf3fd;border-top:1px solid #e7e8eb;box-sizing:border-box"></div>
<div style="position:absolute;left:928px;top:783px;width:121px;height:65px;background:#e5eef9"></div>
<div style="position:absolute;left:1049px;top:783px;width:121px;height:65px;background:#e5eef9"></div>
<div style="position:absolute;left:1775px;top:783px;width:121px;height:65px;background:#e5eef9"></div>
<div style="position:absolute;left:686px;top:782px;width:1px;height:66px;background:#e6e7ea"></div>
<div style="position:absolute;left:807px;top:782px;width:1px;height:66px;background:#e6e7ea"></div>
<div style="position:absolute;left:928px;top:782px;width:1px;height:66px;background:#e6e7ea"></div>
<div style="position:absolute;left:1049px;top:782px;width:1px;height:66px;background:#e6e7ea"></div>
<div style="position:absolute;left:1170px;top:782px;width:1px;height:66px;background:#e6e7ea"></div>
<div style="position:absolute;left:1291px;top:782px;width:1px;height:66px;background:#e6e7ea"></div>
<div style="position:absolute;left:1412px;top:782px;width:1px;height:66px;background:#e6e7ea"></div>
<div style="position:absolute;left:1533px;top:782px;width:1px;height:66px;background:#e6e7ea"></div>
<div style="position:absolute;left:1654px;top:782px;width:1px;height:66px;background:#e6e7ea"></div>
<div style="position:absolute;left:1775px;top:782px;width:1px;height:66px;background:#e6e7ea"></div>
<div style="position:absolute;left:1896px;top:782px;width:1px;height:66px;background:#e6e7ea"></div>
<div style="position:absolute;left:630.5px;top:790.0px;width:42.5px;height:50px;background:#dcefe6;border-radius:6px"></div>
<div style="position:absolute;left:643px;top:806.5px;width:18px;height:18px"><svg width="18" height="18" viewBox="0 0 18 18"><path d="M9.3 0.9 L13.1 3.4 L6.6 13.4 L2.7 15.6 L2.7 10.9 Z M7.9 3 L11.8 5.5" fill="#d8f5ec" stroke="#5aab90" stroke-width="1.05" stroke-linejoin="round"/><path d="M8.9 15.6 H16.3" stroke="#5aab90" stroke-width="1.05"/></svg></div>
<div class="t" style="left:292px;top:807.69px;font-size:17.5px;color:#4a90d9;font-weight:400;-webkit-text-stroke:0.6px #4a90d9;">Studio Room</div>
<div class="t" style="left:687.0px;width:120px;text-align:center;top:806.84px;font-size:18.5px;color:#4a90d9;font-weight:400;-webkit-text-stroke:0.7px #4a90d9;">7</div>
<div class="t" style="left:808.0px;width:120px;text-align:center;top:806.84px;font-size:18.5px;color:#4a90d9;font-weight:400;-webkit-text-stroke:0.7px #4a90d9;">7</div>
<div class="t" style="left:929.0px;width:120px;text-align:center;top:806.84px;font-size:18.5px;color:#4a90d9;font-weight:400;-webkit-text-stroke:0.7px #4a90d9;">7</div>
<div class="t" style="left:1050.0px;width:120px;text-align:center;top:806.84px;font-size:18.5px;color:#4a90d9;font-weight:400;-webkit-text-stroke:0.7px #4a90d9;">7</div>
<div class="t" style="left:1171.0px;width:120px;text-align:center;top:806.84px;font-size:18.5px;color:#4a90d9;font-weight:400;-webkit-text-stroke:0.7px #4a90d9;">7</div>
<div class="t" style="left:1292.0px;width:120px;text-align:center;top:806.84px;font-size:18.5px;color:#4a90d9;font-weight:400;-webkit-text-stroke:0.7px #4a90d9;">7</div>
<div class="t" style="left:1413.0px;width:120px;text-align:center;top:806.84px;font-size:18.5px;color:#4a90d9;font-weight:400;-webkit-text-stroke:0.7px #4a90d9;">7</div>
<div class="t" style="left:1534.0px;width:120px;text-align:center;top:806.84px;font-size:18.5px;color:#4a90d9;font-weight:400;-webkit-text-stroke:0.7px #4a90d9;">7</div>
<div class="t" style="left:1655.0px;width:120px;text-align:center;top:806.84px;font-size:18.5px;color:#4a90d9;font-weight:400;-webkit-text-stroke:0.7px #4a90d9;">7</div>
<div class="t" style="left:1776.0px;width:120px;text-align:center;top:806.84px;font-size:18.5px;color:#4a90d9;font-weight:400;-webkit-text-stroke:0.7px #4a90d9;">7</div>
<div style="position:absolute;left:278px;top:848px;width:1618px;height:77px;background:#fff;border-top:1px solid #e7e8eb;box-sizing:border-box"></div>
<div style="position:absolute;left:928px;top:849px;width:121px;height:76px;background:#f4f6f9"></div>
<div style="position:absolute;left:1049px;top:849px;width:121px;height:76px;background:#f4f6f9"></div>
<div style="position:absolute;left:1775px;top:849px;width:121px;height:76px;background:#f4f6f9"></div>
<div style="position:absolute;left:686px;top:848px;width:1px;height:77px;background:#e6e7ea"></div>
<div style="position:absolute;left:807px;top:848px;width:1px;height:77px;background:#e6e7ea"></div>
<div style="position:absolute;left:928px;top:848px;width:1px;height:77px;background:#e6e7ea"></div>
<div style="position:absolute;left:1049px;top:848px;width:1px;height:77px;background:#e6e7ea"></div>
<div style="position:absolute;left:1170px;top:848px;width:1px;height:77px;background:#e6e7ea"></div>
<div style="position:absolute;left:1291px;top:848px;width:1px;height:77px;background:#e6e7ea"></div>
<div style="position:absolute;left:1412px;top:848px;width:1px;height:77px;background:#e6e7ea"></div>
<div style="position:absolute;left:1533px;top:848px;width:1px;height:77px;background:#e6e7ea"></div>
<div style="position:absolute;left:1654px;top:848px;width:1px;height:77px;background:#e6e7ea"></div>
<div style="position:absolute;left:1775px;top:848px;width:1px;height:77px;background:#e6e7ea"></div>
<div style="position:absolute;left:1896px;top:848px;width:1px;height:77px;background:#e6e7ea"></div>
<div style="position:absolute;left:630.5px;top:861.5px;width:42.5px;height:50px;background:#ddefe9;border-radius:6px"></div>
<div style="position:absolute;left:643px;top:878.0px;width:18px;height:18px"><svg width="18" height="18" viewBox="0 0 18 18"><path d="M9.3 0.9 L13.1 3.4 L6.6 13.4 L2.7 15.6 L2.7 10.9 Z M7.9 3 L11.8 5.5" fill="#d8f5ec" stroke="#5aab90" stroke-width="1.05" stroke-linejoin="round"/><path d="M8.9 15.6 H16.3" stroke="#5aab90" stroke-width="1.05"/></svg></div>
<svg style="position:absolute;left:296px;top:879.5px" width="11" height="14" viewBox="0 0 11 14"><path d="M1 0.5 L10 7 L1 13.5 Z" fill="#2d3748"/></svg>
<svg style="position:absolute;left:314.5px;top:878.3px" width="17" height="17" viewBox="0 0 17 17"><path d="M8.50 0.50 L11.03 5.42 L16.49 6.30 L12.59 10.23 L13.44 15.70 L8.50 13.20 L3.56 15.70 L4.41 10.23 L0.51 6.30 L5.97 5.42 Z" fill="#eba23a" stroke="#eba23a" stroke-width="0.8" stroke-linejoin="round"/></svg>
<div class="t" style="left:337.5px;top:878.63px;font-size:17.8px;color:#333a44;font-weight:400;">Room only</div>
<div style="position:absolute;left:700px;top:862px;width:95px;height:30.5px;box-sizing:border-box;border:1.5px solid #5e96c6;border-radius:5px;background:transparent;box-shadow:inset 0 0 2px #cfe8fb"></div>
<div class="t" style="left:688px;width:100px;text-align:right;top:867.76px;font-size:18px;color:#444;font-weight:400;">5000</div>
<div style="position:absolute;left:821px;top:862px;width:95px;height:30.5px;box-sizing:border-box;border:1.5px solid #5e96c6;border-radius:5px;background:transparent;box-shadow:inset 0 0 2px #cfe8fb"></div>
<div class="t" style="left:809px;width:100px;text-align:right;top:867.76px;font-size:18px;color:#444;font-weight:400;">5000</div>
<div style="position:absolute;left:942px;top:862px;width:95px;height:30.5px;box-sizing:border-box;border:1.5px solid #5e96c6;border-radius:5px;background:transparent;box-shadow:inset 0 0 2px #cfe8fb"></div>
<div class="t" style="left:930px;width:100px;text-align:right;top:867.76px;font-size:18px;color:#444;font-weight:400;">5000</div>
<div style="position:absolute;left:1063px;top:862px;width:95px;height:30.5px;box-sizing:border-box;border:1.5px solid #5e96c6;border-radius:5px;background:transparent;box-shadow:inset 0 0 2px #cfe8fb"></div>
<div class="t" style="left:1051px;width:100px;text-align:right;top:867.76px;font-size:18px;color:#444;font-weight:400;">5000</div>
<div style="position:absolute;left:1184px;top:862px;width:95px;height:30.5px;box-sizing:border-box;border:1.5px solid #5e96c6;border-radius:5px;background:transparent;box-shadow:inset 0 0 2px #cfe8fb"></div>
<div class="t" style="left:1172px;width:100px;text-align:right;top:867.76px;font-size:18px;color:#444;font-weight:400;">5000</div>
<div style="position:absolute;left:1305px;top:862px;width:95px;height:30.5px;box-sizing:border-box;border:1.5px solid #5e96c6;border-radius:5px;background:transparent;box-shadow:inset 0 0 2px #cfe8fb"></div>
<div class="t" style="left:1293px;width:100px;text-align:right;top:867.76px;font-size:18px;color:#444;font-weight:400;">5000</div>
<div style="position:absolute;left:1426px;top:862px;width:95px;height:30.5px;box-sizing:border-box;border:1.5px solid #5e96c6;border-radius:5px;background:transparent;box-shadow:inset 0 0 2px #cfe8fb"></div>
<div class="t" style="left:1414px;width:100px;text-align:right;top:867.76px;font-size:18px;color:#444;font-weight:400;">5000</div>
<div style="position:absolute;left:1547px;top:862px;width:95px;height:30.5px;box-sizing:border-box;border:1.5px solid #5e96c6;border-radius:5px;background:transparent;box-shadow:inset 0 0 2px #cfe8fb"></div>
<div class="t" style="left:1535px;width:100px;text-align:right;top:867.76px;font-size:18px;color:#444;font-weight:400;">5000</div>
<div style="position:absolute;left:1668px;top:862px;width:95px;height:30.5px;box-sizing:border-box;border:1.5px solid #5e96c6;border-radius:5px;background:transparent;box-shadow:inset 0 0 2px #cfe8fb"></div>
<div class="t" style="left:1656px;width:100px;text-align:right;top:867.76px;font-size:18px;color:#444;font-weight:400;">5000</div>
<div style="position:absolute;left:1789px;top:862px;width:95px;height:30.5px;box-sizing:border-box;border:1.5px solid #5e96c6;border-radius:5px;background:transparent;box-shadow:inset 0 0 2px #cfe8fb"></div>
<div class="t" style="left:1777px;width:100px;text-align:right;top:867.76px;font-size:18px;color:#444;font-weight:400;">5000</div>
<div style="position:absolute;left:278px;top:925px;width:1618px;height:78px;background:#fff;border-top:1px solid #e7e8eb;box-sizing:border-box"></div>
<div style="position:absolute;left:928px;top:926px;width:121px;height:77px;background:#f4f6f9"></div>
<div style="position:absolute;left:1049px;top:926px;width:121px;height:77px;background:#f4f6f9"></div>
<div style="position:absolute;left:1775px;top:926px;width:121px;height:77px;background:#f4f6f9"></div>
<div style="position:absolute;left:686px;top:925px;width:1px;height:78px;background:#e6e7ea"></div>
<div style="position:absolute;left:807px;top:925px;width:1px;height:78px;background:#e6e7ea"></div>
<div style="position:absolute;left:928px;top:925px;width:1px;height:78px;background:#e6e7ea"></div>
<div style="position:absolute;left:1049px;top:925px;width:1px;height:78px;background:#e6e7ea"></div>
<div style="position:absolute;left:1170px;top:925px;width:1px;height:78px;background:#e6e7ea"></div>
<div style="position:absolute;left:1291px;top:925px;width:1px;height:78px;background:#e6e7ea"></div>
<div style="position:absolute;left:1412px;top:925px;width:1px;height:78px;background:#e6e7ea"></div>
<div style="position:absolute;left:1533px;top:925px;width:1px;height:78px;background:#e6e7ea"></div>
<div style="position:absolute;left:1654px;top:925px;width:1px;height:78px;background:#e6e7ea"></div>
<div style="position:absolute;left:1775px;top:925px;width:1px;height:78px;background:#e6e7ea"></div>
<div style="position:absolute;left:1896px;top:925px;width:1px;height:78px;background:#e6e7ea"></div>
<div style="position:absolute;left:630.5px;top:939.0px;width:42.5px;height:50px;background:#ddefe9;border-radius:6px"></div>
<div style="position:absolute;left:643px;top:955.5px;width:18px;height:18px"><svg width="18" height="18" viewBox="0 0 18 18"><path d="M9.3 0.9 L13.1 3.4 L6.6 13.4 L2.7 15.6 L2.7 10.9 Z M7.9 3 L11.8 5.5" fill="#d8f5ec" stroke="#5aab90" stroke-width="1.05" stroke-linejoin="round"/><path d="M8.9 15.6 H16.3" stroke="#5aab90" stroke-width="1.05"/></svg></div>
<svg style="position:absolute;left:296px;top:957.0px" width="11" height="14" viewBox="0 0 11 14"><path d="M1 0.5 L10 7 L1 13.5 Z" fill="#2d3748"/></svg>
<svg style="position:absolute;left:320px;top:945px" width="40" height="35" viewBox="0 0 40 35"><g fill="none" stroke="#333a44" stroke-width="1.7" stroke-linecap="round"><path d="M14.3 14.6 L16.8 12.1 A3.8 3.8 0 0 1 22.2 17.5 L20.4 19.9"/><path d="M11.7 17.6 L9.3 20 A3.6 3.6 0 0 0 14.5 25.2 L17.4 22.9"/><path d="M13.5 21.4 L18.6 16.3"/></g></svg>
<div class="t" style="left:350.5px;top:956.13px;font-size:17.8px;color:#333a44;font-weight:400;">Room with breakfast</div>
<div class="t" style="left:694px;width:100px;text-align:right;top:942.76px;font-size:18px;color:#2f3743;font-weight:700;">5000</div>
<div class="t" style="left:815px;width:100px;text-align:right;top:942.76px;font-size:18px;color:#2f3743;font-weight:700;">5000</div>
<div class="t" style="left:936px;width:100px;text-align:right;top:942.76px;font-size:18px;color:#2f3743;font-weight:700;">5000</div>
<div class="t" style="left:1057px;width:100px;text-align:right;top:942.76px;font-size:18px;color:#2f3743;font-weight:700;">5000</div>
<div class="t" style="left:1178px;width:100px;text-align:right;top:942.76px;font-size:18px;color:#2f3743;font-weight:700;">5000</div>
<div class="t" style="left:1299px;width:100px;text-align:right;top:942.76px;font-size:18px;color:#2f3743;font-weight:700;">5000</div>
<div class="t" style="left:1420px;width:100px;text-align:right;top:942.76px;font-size:18px;color:#2f3743;font-weight:700;">5000</div>
<div class="t" style="left:1541px;width:100px;text-align:right;top:942.76px;font-size:18px;color:#2f3743;font-weight:700;">5000</div>
<div class="t" style="left:1662px;width:100px;text-align:right;top:942.76px;font-size:18px;color:#2f3743;font-weight:700;">5000</div>
<div class="t" style="left:1783px;width:100px;text-align:right;top:942.76px;font-size:18px;color:#2f3743;font-weight:700;">5000</div>
<div style="position:absolute;left:0;top:930px;width:1920px;height:48px;background:linear-gradient(to bottom, rgba(0,0,0,0), rgba(0,0,0,0.035))"></div>
<div style="position:absolute;left:0;top:978px;width:1920px;height:5px;background:#fff"></div>
<svg style="position:absolute;left:0;top:974px" width="4" height="6" viewBox="0 0 4 6"><path d="M0 0.5 L3.5 5 H0 Z" fill="#111"/></svg>
<svg style="position:absolute;left:1915px;top:974px" width="5" height="6" viewBox="0 0 5 6"><path d="M5 0.5 L1 5 H5 Z" fill="#111"/></svg>
</body></html>
